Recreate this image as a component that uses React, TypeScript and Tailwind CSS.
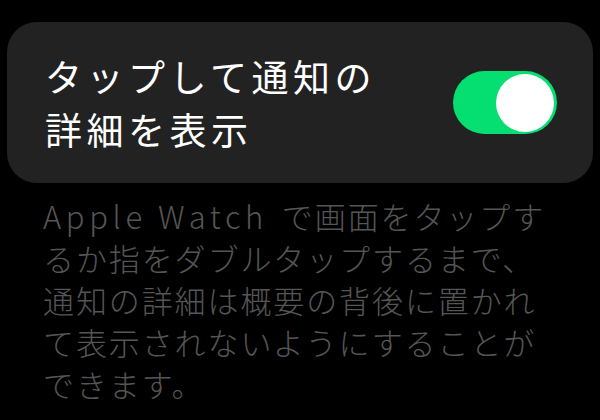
import { useState } from "react";

const FONT = { fontFamily: '"Noto Sans CJK JP", "Noto Sans", sans-serif' };

export default function App() {
  const [on, setOn] = useState(true);

  return (
    <div className="h-[420px] w-[600px] overflow-hidden bg-black" style={FONT}>
      <div className="px-[7px] pt-[22px]">
        <div className="flex h-[161px] items-center justify-between rounded-[30px] bg-[#222222] pl-[38px] pr-[36px]">
          <div className="text-[37px] leading-[53px] tracking-[4.5px] text-white">
            タップして通知の
            <br />
            詳細を表示
          </div>
          <button
            onClick={() => setOn(!on)}
            className={
              "flex h-[63px] w-[104px] shrink-0 items-center rounded-full p-[3px] " +
              (on ? "justify-end bg-[#05df72]" : "justify-start bg-[#3a3a3c]")
            }
          >
            <span className="h-[58px] w-[58px] rounded-full bg-white" />
          </button>
        </div>
      </div>

      <div className="mt-[12px] pl-[43px] text-[31px] font-light leading-[42px] tracking-[1.9px] text-[#555555]">
        <div>
          <span className="mr-[14px] tracking-[4.6px]">Apple Watch</span>で画面をタップす
        </div>
        <div>るか指をダブルタップするまで、</div>
        <div>通知の詳細は概要の背後に置かれ</div>
        <div>て表示されないようにすることが</div>
        <div>できます。</div>
      </div>
    </div>
  );
}
